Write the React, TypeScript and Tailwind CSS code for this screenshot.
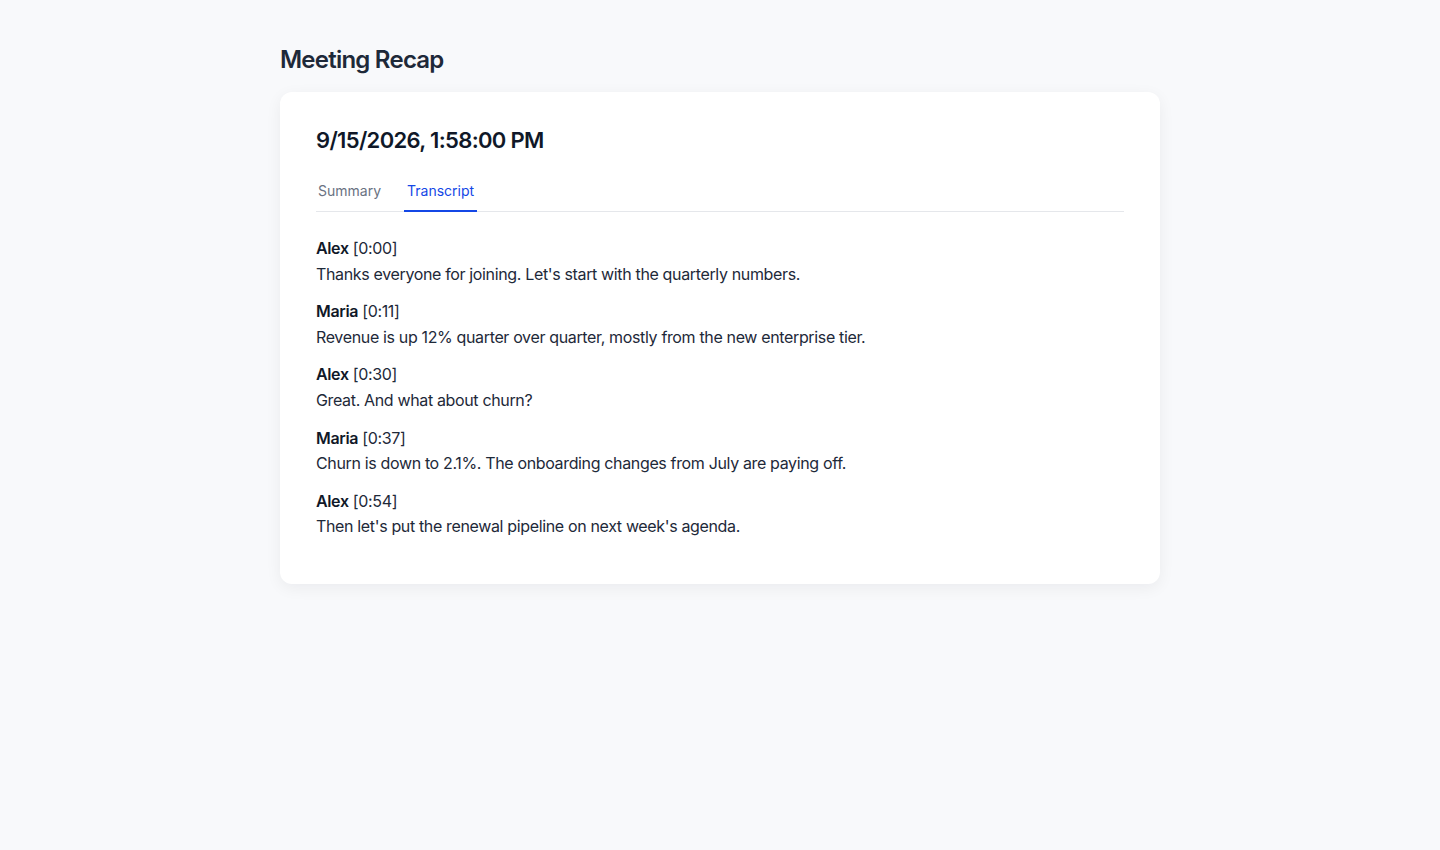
import React, { useState } from 'react'

type Line = { speaker: string; time: string; text: string }

const transcript: Line[] = [
  { speaker: 'Alex', time: '0:00', text: "Thanks everyone for joining. Let's start with the quarterly numbers." },
  { speaker: 'Maria', time: '0:11', text: 'Revenue is up 12% quarter over quarter, mostly from the new enterprise tier.' },
  { speaker: 'Alex', time: '0:30', text: 'Great. And what about churn?' },
  { speaker: 'Maria', time: '0:37', text: 'Churn is down to 2.1%. The onboarding changes from July are paying off.' },
  { speaker: 'Alex', time: '0:54', text: "Then let's put the renewal pipeline on next week's agenda." },
]

const tabs = ['Summary', 'Transcript'] as const

export default function App() {
  const [tab, setTab] = useState<(typeof tabs)[number]>('Transcript')

  return (
    <div className="min-h-screen bg-[#f8f9fb] font-['Inter',sans-serif] text-gray-800">
      <div className="mx-auto w-[880px] pt-[42px]">
        <h1 className="mb-[14px] text-2xl font-semibold leading-9 tracking-[-0.032em] text-gray-800">Meeting Recap</h1>

        {/* Recap card */}
        <div className="rounded-xl bg-white px-9 pt-9 pb-11 shadow-[0_4px_16px_rgba(15,23,42,0.06)]">
          <h2 className="text-[22px] font-semibold leading-6 tracking-[-0.03em] text-gray-900">9/15/2026, 1:58:00 PM</h2>

          <div className="mt-[19px] flex gap-[21px] border-b border-gray-200">
            {tabs.map((t) => (
              <button
                key={t}
                onClick={() => setTab(t)}
                className={
                  t === tab
                    ? '-mb-px border-b-2 border-blue-700 px-[3px] pt-[10px] pb-[9px] text-sm leading-5 text-blue-700'
                    : '-mb-px border-b-2 border-transparent px-0.5 pt-[10px] pb-[9px] text-sm leading-5 text-gray-500'
                }
              >
                {t}
              </button>
            ))}
          </div>

          {tab === 'Transcript' ? (
            <div className="mt-6 flex flex-col gap-3 text-base leading-[1.6] tracking-[-0.022em]">
              {transcript.map((l, i) => (
                <div key={i}>
                  <div>
                    <span className="font-semibold text-gray-900">{l.speaker}</span> [{l.time}]
                  </div>
                  <p>{l.text}</p>
                </div>
              ))}
            </div>
          ) : (
            <p className="mt-6 text-base leading-[1.6] tracking-[-0.022em]">
              Revenue grew 12% quarter over quarter and churn fell to 2.1%.
            </p>
          )}
        </div>
      </div>
    </div>
  )
}
